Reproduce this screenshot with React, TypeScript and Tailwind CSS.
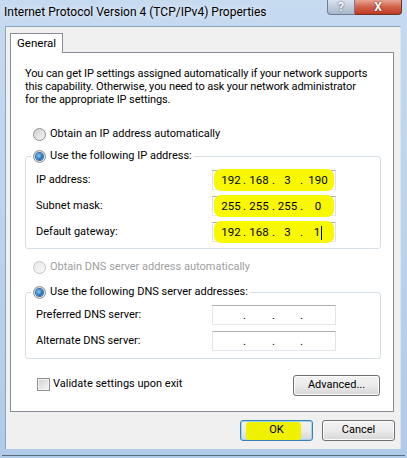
import React from "react";

const FONT = "font-['Roboto','Noto_Sans',sans-serif]";

function Radio({ checked, disabled }: { checked?: boolean; disabled?: boolean }) {
  return (
    <span
      className={`relative inline-flex w-[13px] h-[13px] rounded-full border items-center justify-center shrink-0 ${
        disabled
          ? "border-[#c4c4c4] bg-gradient-to-br from-[#e6e6e6] to-[#fafafa]"
          : "border-[#8e8f8f] bg-gradient-to-br from-[#cfcfcf] to-[#f6f6f6]"
      }`}
    >
      {checked && (
        <span className="w-[7px] h-[7px] rounded-full bg-[radial-gradient(circle_at_40%_40%,#8fd0fa,#1e6fc0_60%,#0b4f94)] ring-1 ring-[#3a6e9e]" />
      )}
    </span>
  );
}

function IpField({ value, highlight, caret }: { value?: string[]; highlight?: boolean; caret?: boolean }) {
  const v = value ?? ["", "", "", ""];
  return (
    <div className="relative w-[124px] h-[20px] bg-white border border-[#abadb3] border-l-[#e2e3ea] border-r-[#e2e3ea] border-b-[#e3e9ef]">
      {highlight && (
        <span className="absolute left-[1px] right-[1px] -top-[2px] -bottom-[2px] rounded-[7px] bg-[#f8f800]" />
      )}
      <div className="relative flex items-center h-full pl-[7px] text-[11.5px] leading-[18px] text-black">
        <span className="w-[22px] text-center">{v[0]}</span>
        <span className="w-[5px] text-center">.</span>
        <span className="w-[24px] text-center">{v[1]}</span>
        <span className="w-[5px] text-center">.</span>
        <span className="w-[23px] text-center">{v[2]}</span>
        <span className="w-[5px] text-center">.</span>
        <span className="w-[28px] text-center">
          {v[3]}
          {caret && <span className="inline-block w-[1px] h-[14px] bg-black align-middle ml-[1px]" />}
        </span>
      </div>
    </div>
  );
}

function Row({ label, children }: { label: string; children: React.ReactNode }) {
  return (
    <div className="flex items-center h-[20px] pl-[10px] pr-[44px]">
      <span className="flex-1 text-[11px]">{label}</span>
      {children}
    </div>
  );
}

function Button({ children, isDefault, mark }: { children: React.ReactNode; isDefault?: boolean; mark?: boolean }) {
  return (
    <button
      className={`relative flex items-center justify-center h-[21px] rounded-[3px] border text-[11px] text-black bg-gradient-to-b from-[#f2f2f2] via-[#ebebeb] to-[#d6d6d6] ${
        isDefault ? "border-[#3c7fb1] shadow-[inset_0_0_0_1px_#9ed4f5]" : "border-[#707070] shadow-[inset_0_0_0_1px_#fcfcfc]"
      }`}
    >
      {mark && <span className="absolute left-[5px] right-[11px] top-[1px] bottom-[0px] rounded-[3px] bg-[#eef200]" />}
      <span className="relative">{children}</span>
    </button>
  );
}

export default function App() {
  return (
    <div className={`w-[407px] h-[458px] bg-gradient-to-b from-[#c6daf0] via-[#bcd3ec] to-[#b0cbe8] ${FONT} text-black flex flex-col overflow-hidden`}>
      {/* Title bar */}
      <div className="h-[26px] flex items-start shrink-0">
        <span className="pl-[4px] pt-[3px] text-[12px] leading-[18px] [text-shadow:0_0_6px_#ffffff]">
          Internet Protocol Version 4 (TCP/IPv4) Properties
        </span>
        <div className="ml-auto mr-[5px] flex">
          <div className="w-[28px] h-[15px] rounded-bl-[4px] border border-t-0 border-[#6d7d93] bg-gradient-to-b from-[#d9e3ee] to-[#a7b6c8] flex items-center justify-center text-white font-bold text-[12px] leading-[14px] [text-shadow:0_0_2px_#1d2a3a]">
            ?
          </div>
          <div className="w-[47px] h-[15px] rounded-br-[4px] border border-t-0 border-l-0 border-[#6b3428] bg-gradient-to-b from-[#e7a594] via-[#d2604a] to-[#c0391f] flex items-center justify-center text-white font-bold text-[12px] leading-[14px] [text-shadow:0_0_2px_#3a1208]">
            X
          </div>
        </div>
      </div>

      {/* Client area */}
      <div className="ml-[5px] mr-[6px] h-[423px] bg-[#f0f0f0] border-l border-t border-[#8da3bd] border-r border-r-[#dbe5f1] flex flex-col">
        {/* Tab header */}
        <div className="ml-[4px] mt-[6px] flex">
          <div className="relative z-10 w-[53px] h-[20px] bg-white border border-b-0 border-[#898c95] text-[11.5px] leading-[19px] pl-[6px]">
            General
          </div>
        </div>

        {/* Tab panel */}
        <div className="ml-[4px] mr-[6px] -mt-px h-[360px] bg-white border border-[#898c95] flex flex-col">
          <p className="mt-[14px] pl-[14px] text-[11px] leading-[13px] tracking-[-0.1px]">
            You can get IP settings assigned automatically if your network supports
            <br />
            this capability. Otherwise, you need to ask your network administrator
            <br />
            for the appropriate IP settings.
          </p>

          <div className="mt-[20px] ml-[22px] flex items-center gap-[4px] h-[16px] text-[11px]">
            <Radio />
            <span>Obtain an IP address automatically</span>
          </div>

          <fieldset className="mt-[6px] ml-[14px] mr-[12px] border border-[#d5dfe5] rounded-[3px] p-0 pb-[6px] flex flex-col">
            <legend className="ml-[5px] px-[2px] h-[16px] flex items-center gap-[4px] text-[11px]">
              <Radio checked />
              <span>Use the following IP address:</span>
            </legend>
            <div className="mt-[6px] flex flex-col gap-[6px]">
              <Row label="IP address:">
                <IpField value={["192", "168", "3", "190"]} highlight />
              </Row>
              <Row label="Subnet mask:">
                <IpField value={["255", "255", "255", "0"]} highlight />
              </Row>
              <Row label="Default gateway:">
                <IpField value={["192", "168", "3", "1"]} highlight caret />
              </Row>
            </div>
          </fieldset>

          <div className="mt-[10px] ml-[22px] flex items-center gap-[4px] h-[16px] text-[11px] text-[#a0a0a0]">
            <Radio disabled />
            <span>Obtain DNS server address automatically</span>
          </div>

          <fieldset className="mt-[9px] ml-[14px] mr-[12px] border border-[#d5dfe5] rounded-[3px] p-0 pb-[7px] flex flex-col">
            <legend className="ml-[5px] px-[2px] h-[16px] flex items-center gap-[4px] text-[11px]">
              <Radio checked />
              <span>Use the following DNS server addresses:</span>
            </legend>
            <div className="mt-[5px] flex flex-col gap-[6px]">
              <Row label="Preferred DNS server:">
                <IpField />
              </Row>
              <Row label="Alternate DNS server:">
                <IpField />
              </Row>
            </div>
          </fieldset>

          <div className="mt-[16px] ml-[26px] mr-[13px] flex items-start">
            <div className="flex items-center gap-[3px] mt-[1px] text-[11px]">
              <span className="w-[13px] h-[13px] border border-[#8e8f8f] bg-gradient-to-br from-[#d0d0d0] to-[#f7f7f7] shadow-[inset_0_0_0_1px_#f4f4f4]" />
              <span>Validate settings upon exit</span>
            </div>
            <div className="ml-auto w-[87px]">
              <Button>
                <span className="w-[85px] block text-center">Advanced...</span>
              </Button>
            </div>
          </div>
        </div>

        {/* Dialog buttons */}
        <div className="mt-[8px] mr-[5px] flex justify-end gap-[9px]">
          <div className="w-[73px]">
            <Button isDefault mark>
              <span className="block w-[71px] text-center">OK</span>
            </Button>
          </div>
          <div className="w-[73px]">
            <Button>
              <span className="block w-[71px] text-center">Cancel</span>
            </Button>
          </div>
        </div>
      </div>
      <div className="mt-[6px] mx-[2px] h-px bg-[#5a6b80]" />
    </div>
  );
}
